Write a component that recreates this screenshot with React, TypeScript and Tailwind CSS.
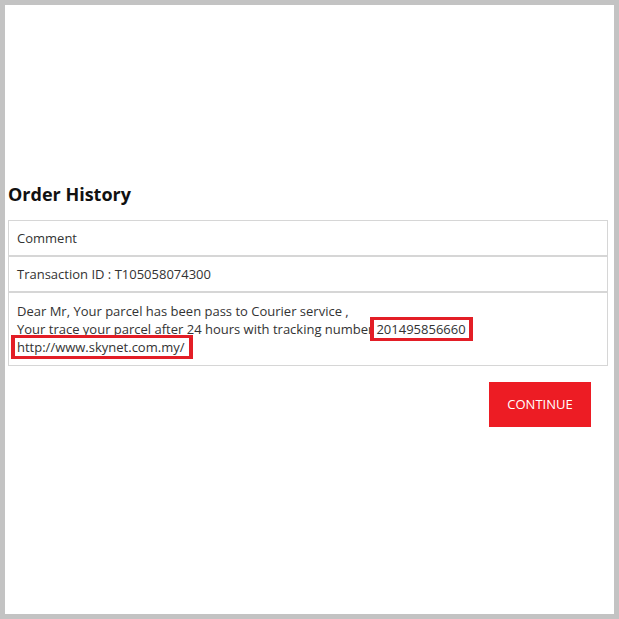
export default function App() {
  return (
    <div className="h-[619px] w-[619px] border-[5px] border-[#c3c3c3] bg-white px-[3px] pt-[177px] font-['Open_Sans',sans-serif] text-[13px] text-[#333]">
      {/* HEADING */}
      <h2 className="text-[18px] font-bold leading-[24px] text-[#111]">Order History</h2>

      {/* HISTORY TABLE */}
      <div className="mt-[14px] w-[600px]">
        <div className="border border-[#d6d6d6] px-[8px] py-[8px] leading-[18px]">Comment</div>
        <div className="border border-[#d6d6d6] px-[8px] py-[8px] leading-[18px]">
          Transaction ID : T105058074300
        </div>
        <div className="border border-[#d6d6d6] px-[8px] py-[9px] leading-[18px]">
          Dear Mr, Your parcel has been pass to Courier service ,
          <br />
          Your trace your parcel after 24 hours with tracking number
          <span className="-ml-[3px] border-[3px] border-x-4 border-[#e31e26] pl-[2px] pr-[3px]">201495856660</span>
          <br />
          <span className="-ml-[6px] border-[3px] border-x-4 border-[#e31e26] pl-[2px] pr-[5px]">http://www.skynet.com.my/</span>
        </div>
      </div>

      {/* ACTIONS */}
      <div className="mt-[16px] flex w-[600px] justify-end pr-[17px]">
        <button className="h-[45px] w-[102px] bg-[#ed1c24] text-[13px] text-white">CONTINUE</button>
      </div>
    </div>
  );
}
